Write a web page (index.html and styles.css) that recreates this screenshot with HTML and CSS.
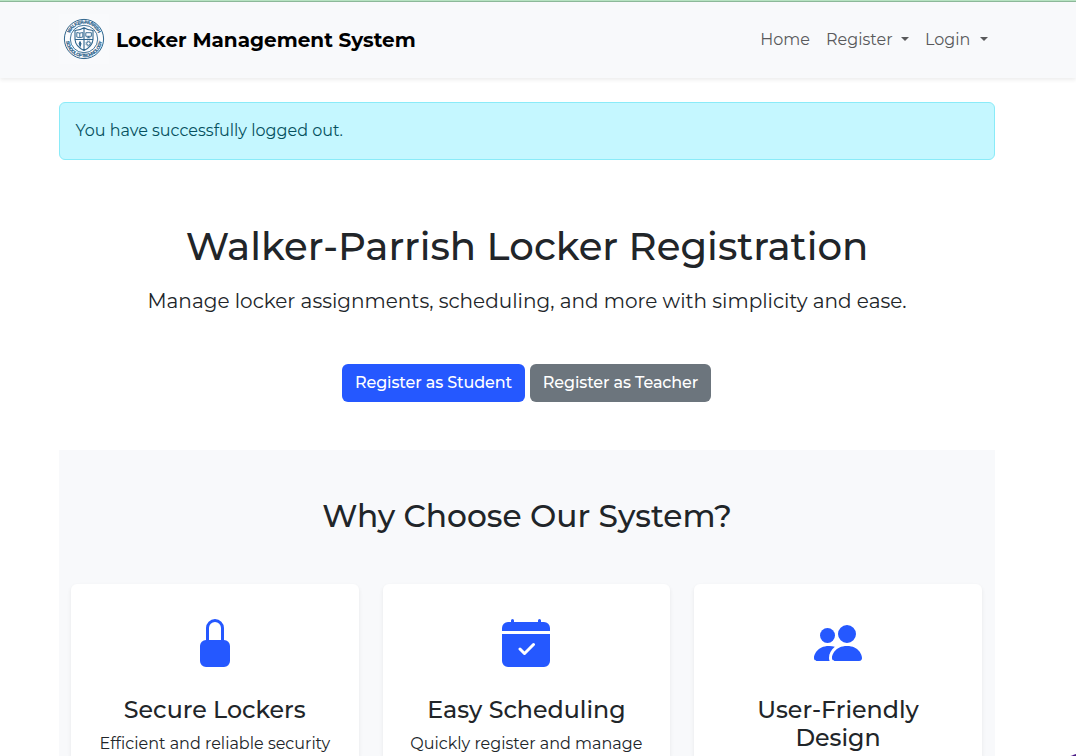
FILE: index.html
```
<!DOCTYPE html>
<html lang="en">
<head>
<meta charset="utf-8">
<title>Locker Management System</title>
<link rel="stylesheet" href="styles.css">
</head>
<body>
<header class="navbar">
  <div class="container navbar-inner">
    <a class="brand">
      <span class="brand-logo">
        <svg width="50" height="50" viewBox="0 0 50 50" fill="none" stroke="#2f658d">
          <defs>
            <path id="arc-top" d="M9.700 25a15.300 15.300 0 0 1 30.600 0"/>
            <path id="arc-bottom" d="M6.800 25a18.200 18.200 0 0 0 36.400 0"/>
          </defs>
          <circle cx="25" cy="25" r="19.600" fill="#fbfcfe" stroke-width="1"/>
          <circle cx="25" cy="25" r="13.700" stroke-width=".9"/>
          <g fill="#2f658d" stroke="#2f658d" stroke-width=".2" class="seal-text">
            <text text-anchor="middle"><textPath href="#arc-top" startOffset="50%" textLength="36">WALKER-PARRISH</textPath></text>
            <text text-anchor="middle"><textPath href="#arc-bottom" startOffset="50%" textLength="52">SCHOOL OF TECHNOLOGY</textPath></text>
          </g>
          <path d="M16 16.500q4.500 0 9-2.800q4.500 2.800 9 2.800v9q-.5 7-9 11q-8.500-4-9-11zM25 13.700v22.800M16 25.500h18" stroke-width="1.100"/>
          <path d="M17.800 18.500l3 .6 3-.6v4.600l-3 .5-3-.5zM20.800 19v4.500M26.800 18.700h5.600v3.600h-5.600zM29.600 22.300v1.500M27.800 23.800h3.600" stroke-width=".9"/>
          <path d="M21 27.500q2 2 .3 4.500q-2.300-2-.3-4.500zM21.200 31v2.500" fill="#2f658d" stroke-width=".9"/>
          <circle cx="29.500" cy="29.500" r="1.800" stroke-width="1"/>
          <circle cx="29.500" cy="29.500" r="2.700" stroke-width=".8" stroke-dasharray="1 1.120"/>
        </svg>
      </span>
      <span class="brand-name">Locker Management System</span>
    </a>
    <nav class="nav">
      <a class="nav-link">Home</a>
      <a class="nav-link nav-register">Register<span class="caret"></span></a>
      <a class="nav-link nav-login">Login<span class="caret"></span></a>
    </nav>
  </div>
</header>
<main class="container">
  <div class="alert">You have successfully logged out.</div>
  <section class="hero">
    <h1 class="hero-title">Walker-Parrish Locker Registration</h1>
    <p class="lead">Manage locker assignments, scheduling, and more with simplicity and ease.</p>
    <div class="actions">
      <a class="btn btn-primary">Register as Student</a>
      <a class="btn btn-secondary">Register as Teacher</a>
    </div>
  </section>
  <section class="features">
    <h2 class="features-title">Why Choose Our System?</h2>
    <div class="cards">
      <article class="card">
        <svg class="icon" viewBox="0 0 16 16"><path d="M8 1a2 2 0 0 1 2 2v4H6V3a2 2 0 0 1 2-2zm3 6V3a3 3 0 0 0-6 0v4a2 2 0 0 0-2 2v5a2 2 0 0 0 2 2h6a2 2 0 0 0 2-2V9a2 2 0 0 0-2-2z"/></svg>
        <h4 class="card-title">Secure Lockers</h4>
        <p class="card-text">Efficient and reliable security</p>
      </article>
      <article class="card">
        <svg class="icon" viewBox="0 0 16 16"><path d="M4 .5a.5.5 0 0 0-1 0V1H2a2 2 0 0 0-2 2v1h16V3a2 2 0 0 0-2-2h-1V.5a.5.5 0 0 0-1 0V1H4V.5zM16 14V5H0v9a2 2 0 0 0 2 2h12a2 2 0 0 0 2-2zm-5.146-5.146-3 3a.5.5 0 0 1-.708 0l-1.500-1.500a.5.5 0 0 1 .708-.708L7.500 10.793l2.646-2.647a.5.5 0 0 1 .708.708z"/></svg>
        <h4 class="card-title">Easy Scheduling</h4>
        <p class="card-text">Quickly register and manage</p>
      </article>
      <article class="card">
        <svg class="icon" viewBox="0 0 16 16"><path d="M7 14s-1 0-1-1 1-4 5-4 5 3 5 4-1 1-1 1H7zm4-6a3 3 0 1 0 0-6 3 3 0 0 0 0 6z"/><path d="M5.216 14A2.238 2.238 0 0 1 5 13c0-1.355.68-2.750 1.936-3.720A6.325 6.325 0 0 0 5 9c-4 0-5 3-5 4s1 1 1 1h4.216z"/><path d="M4.500 8a2.500 2.500 0 1 0 0-5 2.500 2.500 0 0 0 0 5z"/></svg>
        <h4 class="card-title">User-Friendly Design</h4>
      </article>
    </div>
  </section>
</main>
<div class="corner-mark"></div>
</body>
</html>
```
FILE: styles.css
```
* { box-sizing: border-box; }
body {
  margin: 0;
  background: #fff;
  color: #212529;
  font: 400 16px/24px Montserrat, Inter, sans-serif;
}
h1, h2, h4, p { margin: 0; }
.container { width: 936px; margin-left: 59px; }

.navbar {
  height: 78px;
  border-top: 1px solid #b7e3c2;
  background: #f8f9fb;
  box-shadow: 0 2px 4px rgba(0, 0, 0, .075);
}
.navbar-inner {
  display: flex;
  align-items: center;
  justify-content: space-between;
  height: 77px;
}
.navbar::before {
  content: "";
  display: block;
  height: 1px;
  margin-bottom: -1px;
  background: #8cb899;
}
.brand { display: flex; align-items: center; color: #000; }
.brand-logo { display: flex; width: 50px; height: 50px; margin-bottom: 1px; background: #f9fafc; }
.brand-name {
  margin-left: 7px;
  padding-top: 1px;
  font-size: 20px;
  font-weight: 700;
  line-height: 30px;
}
.seal-text { font: 700 4.600px "Liberation Sans", sans-serif; }
.nav { display: flex; gap: 16px; padding-right: 7.500px; color: #59595b; }
.nav-link { display: flex; align-items: center; }
.nav-register { width: 83px; }
.nav-login { width: 62.500px; }
.caret {
  margin: 0 0 1px auto;
  border: 4.800px solid transparent;
  border-top-color: currentColor;
  border-bottom: 0;
}

.alert {
  height: 58px;
  margin-top: 24px;
  padding: 16px 15.500px;
  border: 1px solid #8aebf8;
  border-radius: 6px;
  background: #c5f7ff;
  color: #055160;
}

.hero { padding: 62px 0 48px; text-align: center; }
.hero-title { font-size: 38.700px; font-weight: 500; line-height: 50px; }
.lead { margin-top: 14px; font-size: 20px; line-height: 30px; }
.actions { display: flex; gap: 5px; margin-top: 48px; padding-left: 283px; }
.btn {
  height: 38px;
  border-radius: 6px;
  color: #fff;
  font-weight: 500;
  line-height: 38px;
  letter-spacing: -.130px;
}
.btn-primary { width: 183px; background: #2558ff; }
.btn-secondary { width: 181px; background: #6c757d; }

.features { padding: 47px 12px 0; background: #f8f9fb; text-align: center; }
.features-title { font-size: 31.250px; font-weight: 500; line-height: 38px; }
.cards { display: grid; grid-template-columns: repeat(3, 287.600px); gap: 24px; margin-top: 49px; }
.card {
  height: 172px;
  padding: 35px 24px 0;
  border-radius: 6px 6px 0 0;
  background: #fff;
  box-shadow: 0 2px 4px rgba(0, 0, 0, .075);
}
.icon { display: block; width: 48px; height: 48px; margin: 0 auto 29px; fill: #2558ff; }
.card-title { margin-bottom: 8px; font-size: 23.740px; font-weight: 500; line-height: 28px; }

.corner-mark {
  position: absolute;
  right: 0;
  bottom: 0;
  width: 6px;
  height: 2px;
  background: linear-gradient(90deg, #c9b5dc, #4b1a86 60%);
  clip-path: polygon(0 100%, 100% 0, 100% 100%);
}
```
